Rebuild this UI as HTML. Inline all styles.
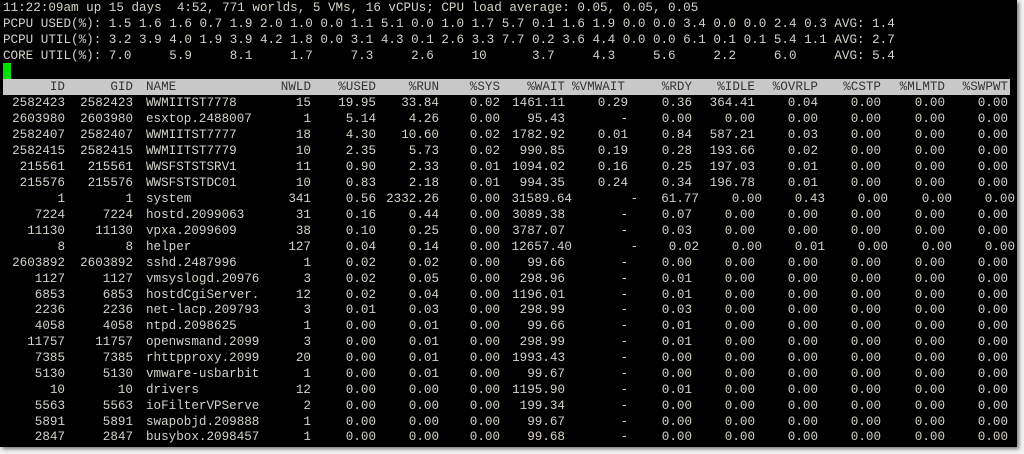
<!DOCTYPE html>
<html><head><meta charset="utf-8"><style>
*{margin:0;padding:0;box-sizing:border-box}
html,body{width:1024px;height:454px;background:#f4f4f4;overflow:hidden}
#t{position:absolute;left:0;top:0;width:1017px;height:447px;background:#000;box-shadow:2px 2px 4px #777;font-family:"Liberation Mono",monospace;font-size:12.6px;color:#d4d2c8}
.top{position:absolute;left:3px;white-space:pre;line-height:16px}
#cur{position:absolute;left:3px;top:63px;width:8px;height:16px;background:#00e000}
#hb{position:absolute;left:3px;top:79px;width:1007px;height:16px;background:#c8c8c8}
.r{position:absolute;left:0;height:16px;line-height:16px;width:1017px;white-space:pre}
.r span{position:absolute;top:0;text-align:right}
.h{color:#333}
.a{left:0;width:65px}.b{left:68px;width:65px}.n{left:146px;text-align:left!important;width:140px}
.c{left:271px;width:40px}.d{left:311px;width:65px}.e{left:376px;width:63px}.f{left:439px;width:61px}
.g{left:500px;width:65px}.i{left:565px;width:63px}.j{left:628px;width:64px}.k{left:692px;width:63px}
.l{left:755px;width:63px}.m{left:818px;width:63px}.o{left:881px;width:64px}.p{left:945px;width:63px}
.s .g,.s .i,.s .j,.s .k,.s .l,.s .m,.s .o,.s .p{transform:translateX(7px)}
.s .i{transform:translateX(10px)}
</style></head><body><div id="t">
<div class="top" style="top:0">11:22:09am up 15 days  4:52, 771 worlds, 5 VMs, 16 vCPUs; CPU load average: 0.05, 0.05, 0.05</div>
<div class="top" style="top:16px">PCPU USED(%): 1.5 1.6 1.6 0.7 1.9 2.0 1.0 0.0 1.1 5.1 0.0 1.0 1.7 5.7 0.1 1.6 1.9 0.0 0.0 3.4 0.0 0.0 2.4 0.3 AVG: 1.4</div>
<div class="top" style="top:32px">PCPU UTIL(%): 3.2 3.9 4.0 1.9 3.9 4.2 1.8 0.0 3.1 4.3 0.1 2.6 3.3 7.7 0.2 3.6 4.4 0.0 0.0 6.1 0.1 0.1 5.4 1.1 AVG: 2.7</div>
<div class="top" style="top:48px">CORE UTIL(%): 7.0     5.9     8.1     1.7     7.3     2.6     10      3.7     4.3     5.6     2.2     6.0     AVG: 5.4</div>
<div id="cur"></div><div id="hb"></div>
<div class="r h" style="top:79px"><span class="a">ID</span><span class="b">GID</span><span class="n">NAME</span><span class="c">NWLD</span><span class="d">%USED</span><span class="e">%RUN</span><span class="f">%SYS</span><span class="g">%WAIT</span><span class="i" style="left:572px;text-align:left">%VMWAIT</span><span class="j">%RDY</span><span class="k">%IDLE</span><span class="l">%OVRLP</span><span class="m">%CSTP</span><span class="o">%MLMTD</span><span class="p">%SWPWT</span></div>
<div class="r" style="top:95px"><span class="a">2582423</span><span class="b">2582423</span><span class="n">WWMIITST7778</span><span class="c">15</span><span class="d">19.95</span><span class="e">33.84</span><span class="f">0.02</span><span class="g">1461.11</span><span class="i">0.29</span><span class="j">0.36</span><span class="k">364.41</span><span class="l">0.04</span><span class="m">0.00</span><span class="o">0.00</span><span class="p">0.00</span></div>
<div class="r" style="top:111px"><span class="a">2603980</span><span class="b">2603980</span><span class="n">esxtop.2488007</span><span class="c">1</span><span class="d">5.14</span><span class="e">4.26</span><span class="f">0.00</span><span class="g">95.43</span><span class="i">-</span><span class="j">0.00</span><span class="k">0.00</span><span class="l">0.00</span><span class="m">0.00</span><span class="o">0.00</span><span class="p">0.00</span></div>
<div class="r" style="top:127px"><span class="a">2582407</span><span class="b">2582407</span><span class="n">WWMIITST7777</span><span class="c">18</span><span class="d">4.30</span><span class="e">10.60</span><span class="f">0.02</span><span class="g">1782.92</span><span class="i">0.01</span><span class="j">0.84</span><span class="k">587.21</span><span class="l">0.03</span><span class="m">0.00</span><span class="o">0.00</span><span class="p">0.00</span></div>
<div class="r" style="top:143px"><span class="a">2582415</span><span class="b">2582415</span><span class="n">WWMIITST7779</span><span class="c">10</span><span class="d">2.35</span><span class="e">5.73</span><span class="f">0.02</span><span class="g">990.85</span><span class="i">0.19</span><span class="j">0.28</span><span class="k">193.66</span><span class="l">0.02</span><span class="m">0.00</span><span class="o">0.00</span><span class="p">0.00</span></div>
<div class="r" style="top:159px"><span class="a">215561</span><span class="b">215561</span><span class="n">WWSFSTSTSRV1</span><span class="c">11</span><span class="d">0.90</span><span class="e">2.33</span><span class="f">0.01</span><span class="g">1094.02</span><span class="i">0.16</span><span class="j">0.25</span><span class="k">197.03</span><span class="l">0.01</span><span class="m">0.00</span><span class="o">0.00</span><span class="p">0.00</span></div>
<div class="r" style="top:175px"><span class="a">215576</span><span class="b">215576</span><span class="n">WWSFSTSTDC01</span><span class="c">10</span><span class="d">0.83</span><span class="e">2.18</span><span class="f">0.01</span><span class="g">994.35</span><span class="i">0.24</span><span class="j">0.34</span><span class="k">196.78</span><span class="l">0.01</span><span class="m">0.00</span><span class="o">0.00</span><span class="p">0.00</span></div>
<div class="r s" style="top:191px"><span class="a">1</span><span class="b">1</span><span class="n">system</span><span class="c">341</span><span class="d">0.56</span><span class="e">2332.26</span><span class="f" style="left:439px">0.00</span><span class="g">31589.64</span><span class="i">-</span><span class="j">61.77</span><span class="k">0.00</span><span class="l">0.43</span><span class="m">0.00</span><span class="o">0.00</span><span class="p">0.00</span></div>
<div class="r" style="top:207px"><span class="a">7224</span><span class="b">7224</span><span class="n">hostd.2099063</span><span class="c">31</span><span class="d">0.16</span><span class="e">0.44</span><span class="f">0.00</span><span class="g">3089.38</span><span class="i">-</span><span class="j">0.07</span><span class="k">0.00</span><span class="l">0.00</span><span class="m">0.00</span><span class="o">0.00</span><span class="p">0.00</span></div>
<div class="r" style="top:223px"><span class="a">11130</span><span class="b">11130</span><span class="n">vpxa.2099609</span><span class="c">38</span><span class="d">0.10</span><span class="e">0.25</span><span class="f">0.00</span><span class="g">3787.07</span><span class="i">-</span><span class="j">0.03</span><span class="k">0.00</span><span class="l">0.00</span><span class="m">0.00</span><span class="o">0.00</span><span class="p">0.00</span></div>
<div class="r s" style="top:239px"><span class="a">8</span><span class="b">8</span><span class="n">helper</span><span class="c">127</span><span class="d">0.04</span><span class="e">0.14</span><span class="f">0.00</span><span class="g">12657.40</span><span class="i">-</span><span class="j">0.02</span><span class="k">0.00</span><span class="l">0.01</span><span class="m">0.00</span><span class="o">0.00</span><span class="p">0.00</span></div>
<div class="r" style="top:255px"><span class="a">2603892</span><span class="b">2603892</span><span class="n">sshd.2487996</span><span class="c">1</span><span class="d">0.02</span><span class="e">0.02</span><span class="f">0.00</span><span class="g">99.66</span><span class="i">-</span><span class="j">0.00</span><span class="k">0.00</span><span class="l">0.00</span><span class="m">0.00</span><span class="o">0.00</span><span class="p">0.00</span></div>
<div class="r" style="top:271px"><span class="a">1127</span><span class="b">1127</span><span class="n">vmsyslogd.20976</span><span class="c">3</span><span class="d">0.02</span><span class="e">0.05</span><span class="f">0.00</span><span class="g">298.96</span><span class="i">-</span><span class="j">0.01</span><span class="k">0.00</span><span class="l">0.00</span><span class="m">0.00</span><span class="o">0.00</span><span class="p">0.00</span></div>
<div class="r" style="top:287px"><span class="a">6853</span><span class="b">6853</span><span class="n">hostdCgiServer.</span><span class="c">12</span><span class="d">0.02</span><span class="e">0.04</span><span class="f">0.00</span><span class="g">1196.01</span><span class="i">-</span><span class="j">0.01</span><span class="k">0.00</span><span class="l">0.00</span><span class="m">0.00</span><span class="o">0.00</span><span class="p">0.00</span></div>
<div class="r" style="top:302px"><span class="a">2236</span><span class="b">2236</span><span class="n">net-lacp.209793</span><span class="c">3</span><span class="d">0.01</span><span class="e">0.03</span><span class="f">0.00</span><span class="g">298.99</span><span class="i">-</span><span class="j">0.03</span><span class="k">0.00</span><span class="l">0.00</span><span class="m">0.00</span><span class="o">0.00</span><span class="p">0.00</span></div>
<div class="r" style="top:318px"><span class="a">4058</span><span class="b">4058</span><span class="n">ntpd.2098625</span><span class="c">1</span><span class="d">0.00</span><span class="e">0.01</span><span class="f">0.00</span><span class="g">99.66</span><span class="i">-</span><span class="j">0.01</span><span class="k">0.00</span><span class="l">0.00</span><span class="m">0.00</span><span class="o">0.00</span><span class="p">0.00</span></div>
<div class="r" style="top:334px"><span class="a">11757</span><span class="b">11757</span><span class="n">openwsmand.2099</span><span class="c">3</span><span class="d">0.00</span><span class="e">0.01</span><span class="f">0.00</span><span class="g">298.99</span><span class="i">-</span><span class="j">0.01</span><span class="k">0.00</span><span class="l">0.00</span><span class="m">0.00</span><span class="o">0.00</span><span class="p">0.00</span></div>
<div class="r" style="top:350px"><span class="a">7385</span><span class="b">7385</span><span class="n">rhttpproxy.2099</span><span class="c">20</span><span class="d">0.00</span><span class="e">0.01</span><span class="f">0.00</span><span class="g">1993.43</span><span class="i">-</span><span class="j">0.00</span><span class="k">0.00</span><span class="l">0.00</span><span class="m">0.00</span><span class="o">0.00</span><span class="p">0.00</span></div>
<div class="r" style="top:366px"><span class="a">5130</span><span class="b">5130</span><span class="n">vmware-usbarbit</span><span class="c">1</span><span class="d">0.00</span><span class="e">0.01</span><span class="f">0.00</span><span class="g">99.67</span><span class="i">-</span><span class="j">0.00</span><span class="k">0.00</span><span class="l">0.00</span><span class="m">0.00</span><span class="o">0.00</span><span class="p">0.00</span></div>
<div class="r" style="top:382px"><span class="a">10</span><span class="b">10</span><span class="n">drivers</span><span class="c">12</span><span class="d">0.00</span><span class="e">0.00</span><span class="f">0.00</span><span class="g">1195.90</span><span class="i">-</span><span class="j">0.01</span><span class="k">0.00</span><span class="l">0.00</span><span class="m">0.00</span><span class="o">0.00</span><span class="p">0.00</span></div>
<div class="r" style="top:398px"><span class="a">5563</span><span class="b">5563</span><span class="n">ioFilterVPServe</span><span class="c">2</span><span class="d">0.00</span><span class="e">0.00</span><span class="f">0.00</span><span class="g">199.34</span><span class="i">-</span><span class="j">0.00</span><span class="k">0.00</span><span class="l">0.00</span><span class="m">0.00</span><span class="o">0.00</span><span class="p">0.00</span></div>
<div class="r" style="top:414px"><span class="a">5891</span><span class="b">5891</span><span class="n">swapobjd.209888</span><span class="c">1</span><span class="d">0.00</span><span class="e">0.00</span><span class="f">0.00</span><span class="g">99.67</span><span class="i">-</span><span class="j">0.00</span><span class="k">0.00</span><span class="l">0.00</span><span class="m">0.00</span><span class="o">0.00</span><span class="p">0.00</span></div>
<div class="r" style="top:429px"><span class="a">2847</span><span class="b">2847</span><span class="n">busybox.2098457</span><span class="c">1</span><span class="d">0.00</span><span class="e">0.00</span><span class="f">0.00</span><span class="g">99.68</span><span class="i">-</span><span class="j">0.00</span><span class="k">0.00</span><span class="l">0.00</span><span class="m">0.00</span><span class="o">0.00</span><span class="p">0.00</span></div>
</div></body></html>
